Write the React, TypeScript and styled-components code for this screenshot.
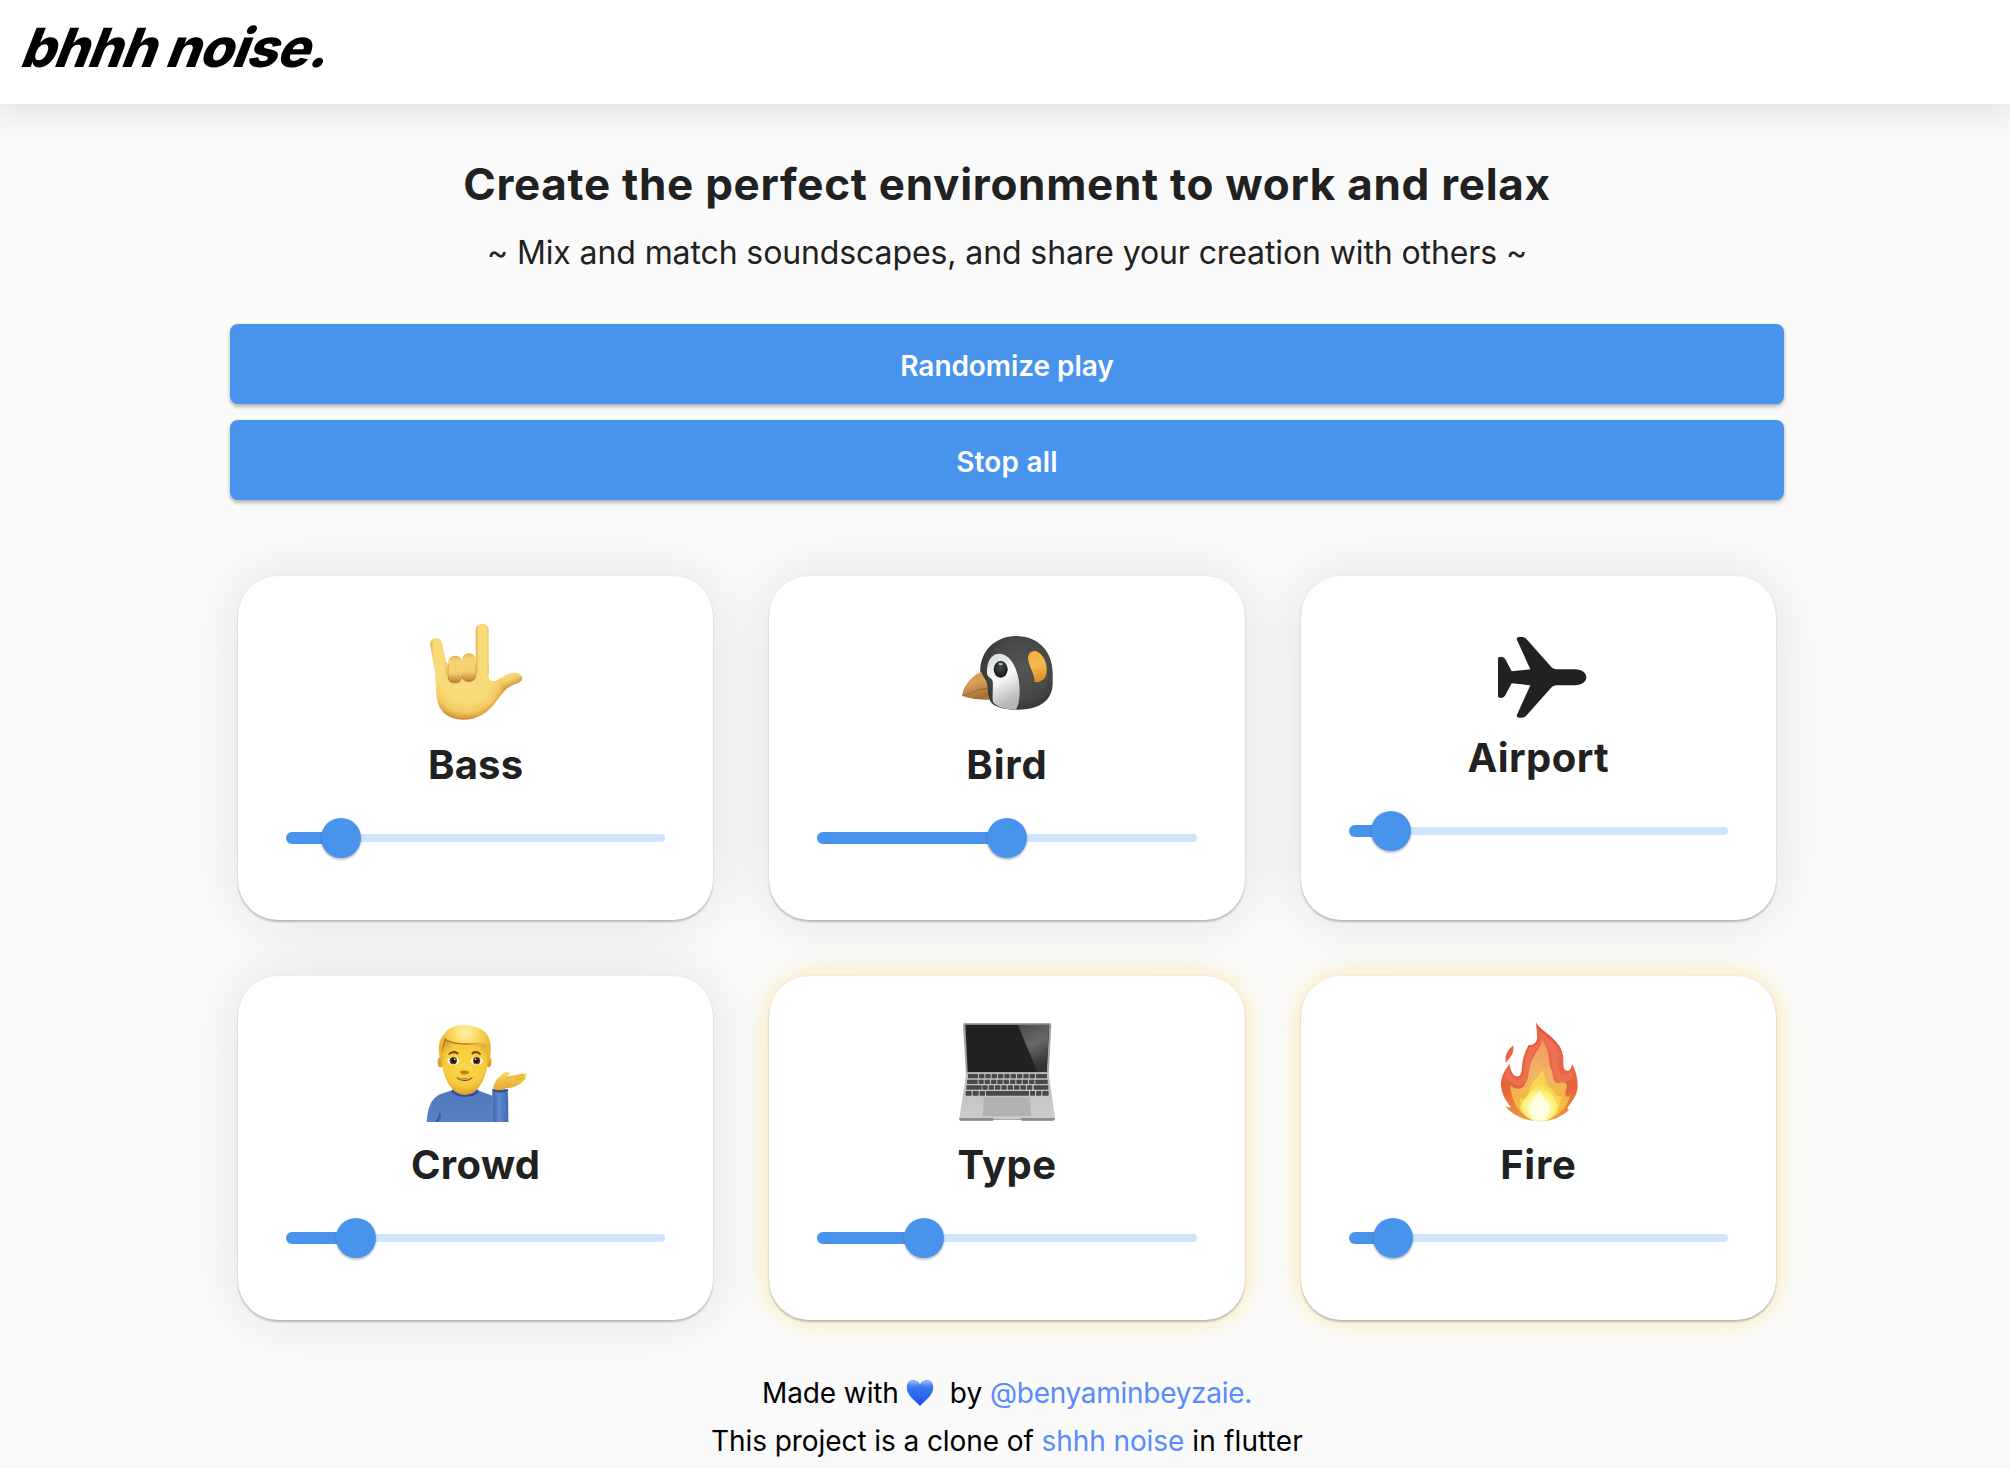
import React from 'react';
import styled, { createGlobalStyle } from 'styled-components';

const GlobalStyle = createGlobalStyle`
  *, *::before, *::after { box-sizing: border-box; }
  body {
    margin: 0;
    background: #fafafa;
    color: #212121;
    font-family: Inter, "Open Sans", "Liberation Sans", sans-serif;
    overflow: hidden;
  }
`;

const Page = styled.div`
  display: flex;
  flex-direction: column;
  height: 1468px;
  overflow: hidden;
`;

const Header = styled.header`
  display: flex;
  align-items: flex-start;
  height: 104px;
  flex: none;
  padding: 16px 18px;
  background: #fff;
  box-shadow: 0 0 36px 8px rgba(0, 0, 0, 0.105);
`;

const Logo = styled.h1`
  margin: 0;
  color: #000;
  font-size: 54px;
  font-weight: 800;
  line-height: 64px;
  letter-spacing: -0.75px;
  white-space: nowrap;
  transform: skewX(-21deg);
  transform-origin: 0 52px;
`;

const Main = styled.main`
  display: flex;
  flex-direction: column;
  padding: 54px 226px 0 230px;
`;

const Heading = styled.h2`
  margin: 0;
  font-size: 44px;
  font-weight: 700;
  line-height: 52px;
  letter-spacing: 0.716px;
  text-align: center;
`;

const Tagline = styled.p`
  margin: 23px 0 51px;
  font-size: 32px;
  line-height: 40px;
  letter-spacing: -0.106px;
  text-align: center;
`;

const Actions = styled.div`
  display: flex;
  flex-direction: column;
  gap: 16px;
`;

const ActionButton = styled.button<{ $spacing: number }>`
  height: 80px;
  padding: 3px 0 0;
  border: 0;
  border-radius: 8px;
  background: #4894ed;
  color: #fff;
  font: 600 28px/34px Inter, "Open Sans", sans-serif;
  letter-spacing: ${(p) => p.$spacing}px;
  box-shadow: 0 3px 4px rgba(0, 0, 0, 0.23), 0 1px 3px rgba(0, 0, 0, 0.12);
`;

const CardGrid = styled.section`
  display: grid;
  grid-template-columns: repeat(3, 1fr);
  gap: 56px;
  padding: 0 8px;
  margin-top: 76px;
`;

const Card = styled.article<{ $active?: boolean }>`
  display: flex;
  flex-direction: column;
  align-items: center;
  height: 344px;
  padding: 40px 48px 0;
  border-radius: 40px;
  background: #fff;
  box-shadow: ${(p) =>
    p.$active
      ? '0 2px 2px rgba(0,0,0,0.22), 0 0 2px rgba(0,0,0,0.08), 0 0 28px rgba(255,193,7,0.32)'
      : '0 2px 2px rgba(0,0,0,0.22), 0 0 2px rgba(0,0,0,0.06), 0 0 60px rgba(0,0,0,0.1)'};
`;

const Glyph = styled.svg`
  display: block;
  flex: none;
`;

const CardTitle = styled.h3<{ $spacing: number }>`
  margin: -1px 0 29px;
  font-size: 40px;
  font-weight: 700;
  line-height: 48px;
  letter-spacing: ${(p) => p.$spacing}px;
`;

const SliderRow = styled.div`
  display: flex;
  align-items: center;
  align-self: stretch;
  height: 40px;
`;

const Filled = styled.div`
  flex: none;
  height: 12px;
  border-radius: 6px 0 0 6px;
  background: #4894ed;
`;

const Thumb = styled.div`
  flex: none;
  width: 40px;
  height: 40px;
  margin: 0 -20px;
  border-radius: 50%;
  background: #4894ed;
  box-shadow: 0 2px 2px rgba(0, 0, 0, 0.16), 0 1px 3px rgba(0, 0, 0, 0.14);
  z-index: 1;
`;

const Remaining = styled.div`
  flex: 1;
  height: 8px;
  border-radius: 0 4px 4px 0;
  background: #cfe5fb;
`;

const Footer = styled.footer`
  display: flex;
  flex-direction: column;
  align-items: center;
  margin-top: 49px;
  color: #000;
  font-size: 28px;
  line-height: 48px;
`;

const FooterLine = styled.div`
  display: flex;
  align-items: center;
  white-space: pre;
`;

const Phrase = styled.span<{ $spacing: number }>`
  letter-spacing: ${(p) => p.$spacing}px;
`;

const FooterLink = styled.a<{ $spacing: number }>`
  color: #588bfb;
  letter-spacing: ${(p) => p.$spacing}px;
  text-decoration: none;
`;

const HeartSvg = styled.svg`
  display: block;
  margin: 0 16px 0 7px;
`;

const HandIcon = () => (
  <Glyph width="150" height="126" viewBox="2 48 450 378">
    <defs>
      <radialGradient id="palm" gradientUnits="userSpaceOnUse" cx="195" cy="232" r="128" fx="205" fy="225">
        <stop offset="0" stopColor="#f9dc80" />
        <stop offset="0.6" stopColor="#f9da78" />
        <stop offset="0.82" stopColor="#f3ca60" />
        <stop offset="0.93" stopColor="#dfa648" />
        <stop offset="1" stopColor="#c4853a" />
      </radialGradient>
      <linearGradient id="knuckle" x1="0" y1="0" x2="0" y2="1">
        <stop offset="0" stopColor="#e3b24b" />
        <stop offset="0.2" stopColor="#f6d475" />
        <stop offset="0.65" stopColor="#f5d06a" />
        <stop offset="1" stopColor="#c58636" />
      </linearGradient>
      <linearGradient id="finger" x1="0" y1="0" x2="1" y2="0">
        <stop offset="0" stopColor="#e3b04b" />
        <stop offset="0.22" stopColor="#f8d977" />
        <stop offset="0.8" stopColor="#f9db7c" />
        <stop offset="1" stopColor="#eec45c" />
      </linearGradient>
      <linearGradient id="thumb" gradientUnits="userSpaceOnUse" x1="310" y1="225" x2="326" y2="262">
        <stop offset="0" stopColor="#f9dc80" />
        <stop offset="0.5" stopColor="#f5d06a" />
        <stop offset="1" stopColor="#cf9441" />
      </linearGradient>
    </defs>
    <path d="M265 236C270 244 276 244 282 243C296 242 308 226 328 220C346 215 362 220 366 234C366 244 356 248 345 252C314 263 303 283 289 302L270 302Z" fill="url(#thumb)" />
    <path d="M105 225L137 188L146 190V225H226V190H265V228C265 240 272 244 282 243C290 244 296 240 302 234L312 274C303 283 297 292 289 302C264 337 232 359 188 359C146 359 120 337 112 306C106 283 107 252 105 225Z" fill="url(#palm)" />
    <path d="M226 225V90C226 78 235 71 246 71C257 71 265 79 265 90V225Z" fill="url(#finger)" />
    <path d="M90 137C88 122 97 115 107 115C118 115 124 122 126 132L138 190L140 232L108 262C106 240 105 222 102 205Z" fill="url(#finger)" />
    <path d="M124 215L146 230L250 222V254H120Z" fill="#f8d977" />
    <rect x="142" y="180" width="43" height="70" rx="20" fill="#bd803a" />
    <rect x="184" y="180" width="43" height="66" rx="20" fill="#bd803a" />
    <rect x="144" y="167" width="41" height="79" rx="19" fill="url(#knuckle)" />
    <rect x="185" y="160" width="41" height="82" rx="19" fill="url(#knuckle)" />
  </Glyph>
);

const BirdIcon = () => (
  <Glyph width="140" height="126" viewBox="-9 18 420 378">
    <defs>
      <radialGradient id="plume" gradientUnits="userSpaceOnUse" cx="245" cy="175" r="125">
        <stop offset="0" stopColor="#555553" />
        <stop offset="0.7" stopColor="#484846" />
        <stop offset="1" stopColor="#373735" />
      </radialGradient>
      <linearGradient id="cheek" x1="0" y1="0" x2="0.3" y2="1">
        <stop offset="0" stopColor="#d8d8d8" />
        <stop offset="0.5" stopColor="#fbfbfb" />
        <stop offset="1" stopColor="#b7b7b7" />
      </linearGradient>
      <linearGradient id="beak" x1="0" y1="0" x2="0.3" y2="1">
        <stop offset="0" stopColor="#d79b4e" />
        <stop offset="0.5" stopColor="#d69f5a" />
        <stop offset="1" stopColor="#a87132" />
      </linearGradient>
      <linearGradient id="ear" x1="0" y1="0" x2="0.2" y2="1">
        <stop offset="0" stopColor="#f1ae35" />
        <stop offset="0.55" stopColor="#f3bb50" />
        <stop offset="1" stopColor="#d9912d" />
      </linearGradient>
      <radialGradient id="eye" cx="0.5" cy="0.4" r="0.6">
        <stop offset="0" stopColor="#44494c" />
        <stop offset="0.6" stopColor="#272c2f" />
        <stop offset="1" stopColor="#111518" />
      </radialGradient>
    </defs>
    <path d="M121 190C117 128 163 78 228 78C296 78 339 126 338 192V222C336 272 300 299 232 299C196 299 160 292 150 272C142 255 142 232 134 214Z" fill="url(#plume)" />
    <path d="M141 186C141 152 154 131 179 131C216 132 239 188 239 243C239 268 235 287 228 299C190 298 163 288 158 272C157 250 160 230 158 214C154 200 141 205 141 186Z" fill="url(#cheek)" />
    <path d="M66 257C69 226 100 194 124 185C130 205 144 212 143 236C143 252 146 260 150 269C118 269 87 266 66 257Z" fill="url(#beak)" />
    <path d="M68 257C92 252 106 239 142 235" fill="none" stroke="#9b6427" strokeWidth="3" />
    <ellipse cx="182" cy="178" rx="21" ry="25" fill="url(#eye)" />
    <ellipse cx="182" cy="162" rx="7" ry="4" fill="#e5e5e5" opacity="0.7" />
    <path d="M264 143C265 127 279 119 293 125C314 137 325 168 319 194C315 209 298 219 284 215C284 190 264 165 264 143Z" fill="url(#ear)" />
  </Glyph>
);

const PlaneIcon = () => (
  <Glyph width="140" height="119" viewBox="-5 18 420 357">
    <path
      fill="#212121"
      d="M85 146C85 142 88 140 93 140C100 140 104 143 107 148L126 184L182 178L142 90C140 84 143 81 150 81C162 80 166 82 171 88L243 169C249 176 254 178 260 178L315 178C338 179 350 190 350 202C350 214 338 225 315 226L260 226C254 226 249 228 243 235L171 316C166 322 162 324 150 323C143 323 140 320 142 314L182 226L126 220L107 256C104 261 100 264 93 264C88 264 85 262 85 258Z"
    />
  </Glyph>
);

const ManIcon = () => (
  <Glyph width="150" height="126" viewBox="2 48 450 378">
    <defs>
      <linearGradient id="shirt" x1="0" y1="0" x2="0" y2="1">
        <stop offset="0" stopColor="#4f79bd" />
        <stop offset="1" stopColor="#5882c2" />
      </linearGradient>
      <linearGradient id="sleeve" x1="0" y1="0" x2="1" y2="0">
        <stop offset="0" stopColor="#3d65ab" />
        <stop offset="0.4" stopColor="#5d88ca" />
        <stop offset="1" stopColor="#406ab2" />
      </linearGradient>
      <radialGradient id="face" gradientUnits="userSpaceOnUse" cx="192" cy="195" r="95">
        <stop offset="0" stopColor="#fbd845" />
        <stop offset="0.65" stopColor="#f6cb3c" />
        <stop offset="1" stopColor="#d7962c" />
      </radialGradient>
      <radialGradient id="hair" gradientUnits="userSpaceOnUse" cx="195" cy="98" r="80">
        <stop offset="0" stopColor="#fff0ac" />
        <stop offset="0.45" stopColor="#fbdc64" />
        <stop offset="1" stopColor="#eab52f" />
      </radialGradient>
      <linearGradient id="hand" x1="0" y1="0" x2="0" y2="1">
        <stop offset="0" stopColor="#fcdc5d" />
        <stop offset="1" stopColor="#e2a22f" />
      </linearGradient>
    </defs>
    <path d="M79 366C82 324 92 290 128 280L160 269H228L276 287V366Z" fill="url(#shirt)" />
    <path d="M114 366C126 352 120 342 118 328C120 344 109 354 105 366Z" fill="#3b609f" />
    <path d="M276 366V270C288 264 311 264 322 270C324 296 324 330 324 366Z" fill="url(#sleeve)" />
    <path d="M158 267C160 290 228 290 231 267L235 273C230 296 160 296 154 272Z" fill="#2e5087" />
    <path d="M160 258C160 292 228 292 229 258Z" fill="#d9982c" />
    <ellipse cx="120" cy="187" rx="8" ry="15" fill="#dc9d2d" />
    <ellipse cx="265" cy="187" rx="8" ry="15" fill="#dc9d2d" />
    <path d="M122 160C122 116 147 96 193 96C239 96 263 116 264 160C264 218 242 284 193 284C145 284 122 215 122 160Z" fill="url(#face)" />
    <path d="M126 194C110 163 112 119 132 102C146 76 183 72 215 78C251 84 268 106 271 135C272 158 270 180 264 194C262 172 259 148 252 132C214 137 162 139 136 123C129 146 128 170 126 194Z" fill="url(#hair)" />
    <path d="M134 112C138 124 168 133 252 130C220 137 155 136 137 122C130 138 128 150 126 162C125 146 128 127 134 112Z" fill="#bd791d" />
    <path d="M144 163C151 152 164 150 175 159L173 164C163 158 153 159 146 166ZM213 159C223 150 236 152 242 163L239 166C231 158 224 159 215 164Z" fill="#7b4518" />
    <ellipse cx="159" cy="183" rx="18" ry="12" fill="#fffdf4" />
    <ellipse cx="229" cy="183" rx="18" ry="12" fill="#fffdf4" />
    <circle cx="159" cy="182" r="11" fill="#67381b" />
    <circle cx="229" cy="182" r="11" fill="#67381b" />
    <circle cx="160" cy="182" r="7" fill="#151215" />
    <circle cx="228" cy="182" r="7" fill="#151215" />
    <circle cx="163" cy="178" r="2.5" fill="#fff" />
    <circle cx="226" cy="178" r="2.5" fill="#fff" />
    <path d="M178 216C184 210 201 210 207 217C201 226 185 226 178 216Z" fill="#c7791e" />
    <path d="M167 232C182 236 202 236 218 232C210 246 177 247 167 232Z" fill="#86431b" />
    <path d="M173 234C184 237 201 237 212 234C205 240 181 240 173 234Z" fill="#fff" />
    <path d="M279 268C281 250 286 238 300 229C308 217 320 214 328 218C329 223 322 226 318 231C333 226 358 221 376 220C380 222 378 228 374 231C379 232 376 239 369 242C359 255 338 264 315 265C311 272 287 274 279 268Z" fill="url(#hand)" />
    <path d="M318 232C326 232 332 233 339 230M343 232L372 225M344 240L371 233" fill="none" stroke="#d9992d" strokeWidth="2.5" />
    <path d="M276 266C289 272 309 273 323 266V273C308 279 290 278 276 273Z" fill="#2f518a" />
  </Glyph>
);

const KEY_ROWS = [
  { y: 222, h: 13, keys: [[84, 30], [117, 16], [136, 16], [155, 16], [174, 16], [193, 16], [212, 16], [231, 16], [250, 16], [269, 16], [288, 33]] },
  { y: 239, h: 13, keys: [[81, 32], [116, 15], [134, 16], [153, 16], [172, 16], [191, 16], [210, 16], [229, 16], [248, 16], [267, 16], [286, 37]] },
  { y: 256, h: 13, keys: [[79, 46], [127, 16], [146, 16], [165, 16], [184, 16], [203, 16], [222, 16], [241, 17], [261, 16], [281, 44]] },
  { y: 273, h: 14, keys: [[77, 18], [98, 18], [119, 16], [138, 129], [270, 15], [288, 16], [307, 19]] },
];

const LaptopIcon = () => (
  <Glyph width="140" height="126" viewBox="-9 48 420 378">
    <defs>
      <linearGradient id="glare" x1="0" y1="0" x2="0.3" y2="1">
        <stop offset="0" stopColor="#4c4c4c" />
        <stop offset="0.5" stopColor="#686868" />
        <stop offset="1" stopColor="#333" />
      </linearGradient>
      <linearGradient id="deck" x1="0" y1="0" x2="0" y2="1">
        <stop offset="0" stopColor="#bdbdbd" />
        <stop offset="1" stopColor="#cdcdcd" />
      </linearGradient>
    </defs>
    <path d="M69 75C69 71 71 69 75 69H328C332 69 334 71 334 75L326 222H78Z" fill="#a4a4a4" />
    <path d="M76 74H328L320 216H83Z" fill="#222" />
    <path d="M234 75H327L320 216H292Z" fill="url(#glare)" />
    <path d="M79 218H326L345 355C345 360 343 362 338 362H246L242 357H162L158 362H64C59 362 57 360 58 355Z" fill="url(#deck)" />
    <path d="M58 354H158L163 357H241L245 354H345C345 360 343 362 338 362H246L242 359H162L158 362H64C59 362 57 360 58 354Z" fill="#8c8c8c" />
    {KEY_ROWS.map((row) =>
      row.keys.map(([x, w]) => <rect key={`${row.y}-${x}`} x={x} y={row.y} width={w} height={row.h} rx="2" fill="#494949" />),
    )}
    <path d="M132 292H270L274 349H127Z" fill="#b2b2b2" />
  </Glyph>
);

const FireIcon = () => (
  <Glyph width="140" height="126" viewBox="-5 48 420 378">
    <defs>
      <linearGradient id="outer" x1="0" y1="0" x2="0" y2="1">
        <stop offset="0" stopColor="#e4502f" />
        <stop offset="0.35" stopColor="#ec6646" />
        <stop offset="0.65" stopColor="#e6603a" />
        <stop offset="1" stopColor="#ef9a3b" />
      </linearGradient>
      <linearGradient id="middle" x1="0" y1="0" x2="0" y2="1">
        <stop offset="0" stopColor="#ef9a5d" />
        <stop offset="0.45" stopColor="#f3b565" />
        <stop offset="0.75" stopColor="#f3b741" />
        <stop offset="1" stopColor="#f6cb4a" />
      </linearGradient>
      <radialGradient id="core" gradientUnits="userSpaceOnUse" cx="208" cy="325" r="85">
        <stop offset="0" stopColor="#fffff0" />
        <stop offset="0.35" stopColor="#fffcae" />
        <stop offset="0.65" stopColor="#fcec68" stopOpacity="0.9" />
        <stop offset="1" stopColor="#f6cf5a" stopOpacity="0" />
      </radialGradient>
    </defs>
    <path d="M131 136C133 156 127 169 108 188C104 163 116 149 131 136Z" fill="#eb6446" />
    <path d="M199 67C207 88 245 102 270 139C289 174 276 188 284 208C294 218 306 210 307 191C318 211 324 232 324 257C324 287 306 303 297 319C291 325 294 329 300 328C276 352 244 364 208 364C169 363 131 348 106 318C113 322 122 324 123 320C109 303 94 282 94 252C94 229 107 207 120 192C123 213 130 229 143 229C159 229 155 201 160 177C163 163 171 146 177 135C193 136 204 126 203 108Z" fill="url(#outer)" />
    <path d="M199 78C211 101 241 112 262 143C274 171 261 188 266 209C276 228 299 229 307 207C313 228 311 241 299 239C279 254 255 247 250 225C247 189 254 160 218 122C207 145 180 166 179 197C181 240 168 257 148 257C126 256 116 236 106 235C107 221 113 211 117 207C121 230 132 239 145 239C168 235 163 204 168 179C172 166 175 151 181 141C200 141 210 129 210 110Z" fill="#f07a60" opacity="0.6" />
    <path d="M217 119C245 157 232 183 246 210C252 236 250 252 271 248C292 245 296 253 287 276C286 291 294 296 302 286C296 311 278 344 232 361H189C151 347 126 308 121 254C132 269 156 271 164 256C182 235 174 204 188 178C197 154 213 145 217 119Z" fill="url(#middle)" />
    <path d="M218 210C231 234 219 247 246 266C257 279 257 293 276 289C273 320 251 348 229 361H192C165 345 149 320 152 295C163 299 175 297 177 278C179 249 205 235 218 210Z" fill="#f7d553" />
    <path d="M209 245C239 271 260 294 266 326C258 345 242 356 229 362H191C173 352 157 339 151 321C166 291 184 272 209 245Z" fill="url(#core)" />
    <path d="M179 315C192 306 195 290 210 270C218 294 232 302 240 316C238 341 230 358 224 362H195C186 355 180 336 179 315Z" fill="#ffffed" opacity="0.75" />
  </Glyph>
);

const Heart = () => (
  <HeartSvg width="28" height="28" viewBox="0 0 28 28">
    <defs>
      <linearGradient id="heart" x1="0" y1="0" x2="0" y2="1">
        <stop offset="0" stopColor="#5f95f6" />
        <stop offset="0.35" stopColor="#3574f0" />
        <stop offset="1" stopColor="#1c50e4" />
      </linearGradient>
      <linearGradient id="shine" x1="0" y1="0" x2="0" y2="1">
        <stop offset="0" stopColor="#b9d2fb" stopOpacity="0.8" />
        <stop offset="1" stopColor="#6096f4" stopOpacity="0" />
      </linearGradient>
    </defs>
    <path d="M14 27C8.500 21 .8 16.500 .8 8.300C.8 3.800 3.700 1 7.300 1C10.500 1 13 3.200 14 5.500C15 3.200 17.500 1 20.700 1C24.300 1 27.200 3.800 27.200 8.300C27.200 16.500 19.500 21 14 27Z" fill="url(#heart)" />
    <ellipse cx="7.600" cy="5" rx="4.800" ry="3.200" fill="url(#shine)" />
    <ellipse cx="20.400" cy="5" rx="4.800" ry="3.200" fill="url(#shine)" />
  </HeartSvg>
);

interface Sound {
  name: string;
  icon: React.ReactNode;
  volume: number;
  spacing: number;
  active?: boolean;
}

const SOUNDS: Sound[] = [
  { name: 'Bass', icon: <HandIcon />, volume: 14.6, spacing: 0.2 },
  { name: 'Bird', icon: <BirdIcon />, volume: 50, spacing: 0.9 },
  { name: 'Airport', icon: <PlaneIcon />, volume: 11.2, spacing: 0.4 },
  { name: 'Crowd', icon: <ManIcon />, volume: 18.5, spacing: 0.4 },
  { name: 'Type', icon: <LaptopIcon />, volume: 28.2, spacing: 0.4, active: true },
  { name: 'Fire', icon: <FireIcon />, volume: 11.8, spacing: 0.7, active: true },
];

const VolumeSlider = ({ value }: { value: number }) => (
  <SliderRow>
    <Filled style={{ width: `${value}%` }} />
    <Thumb />
    <Remaining />
  </SliderRow>
);

export default function App() {
  return (
    <>
      <GlobalStyle />
      <Page>
        <Header>
          <Logo>bhhh noise.</Logo>
        </Header>
        <Main>
          <Heading>Create the perfect environment to work and relax</Heading>
          <Tagline>~ Mix and match soundscapes, and share your creation with others ~</Tagline>
          <Actions>
            <ActionButton $spacing={-0.06}>Randomize play</ActionButton>
            <ActionButton $spacing={0.2}>Stop all</ActionButton>
          </Actions>
          <CardGrid>
            {SOUNDS.map((sound) => (
              <Card key={sound.name} $active={sound.active}>
                {sound.icon}
                <CardTitle $spacing={sound.spacing}>{sound.name}</CardTitle>
                <VolumeSlider value={sound.volume} />
              </Card>
            ))}
          </CardGrid>
          <Footer>
            <FooterLine>
              <Phrase $spacing={-0.1}>Made with</Phrase>
              <Heart />
              <Phrase $spacing={0}>by </Phrase>
              <FooterLink $spacing={-0.285}>@benyaminbeyzaie.</FooterLink>
            </FooterLine>
            <FooterLine>
              <Phrase $spacing={-0.08}>This project is a clone of </Phrase>
              <FooterLink $spacing={-0.08}>shhh noise</FooterLink>
              <Phrase $spacing={0.15}> in flutter</Phrase>
            </FooterLine>
          </Footer>
        </Main>
      </Page>
    </>
  );
}
